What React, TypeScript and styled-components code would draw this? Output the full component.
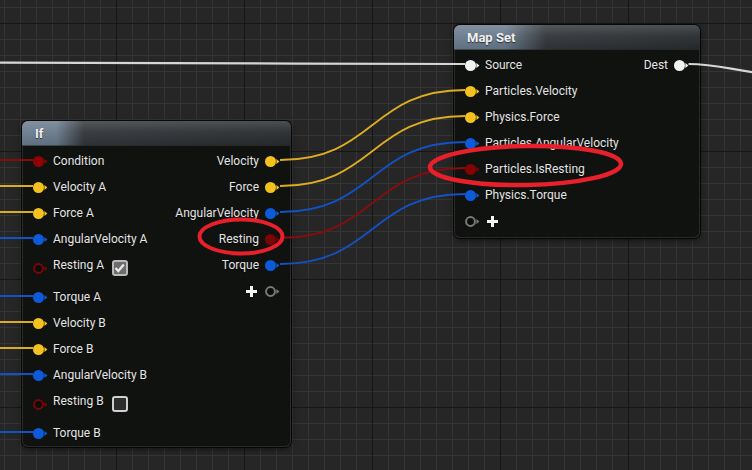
import React from "react";
import styled, { createGlobalStyle } from "styled-components";

const GlobalStyle = createGlobalStyle`
  html, body { margin: 0; padding: 0; background: #262626; overflow: hidden; }
  #root { width: 752px; height: 470px; }
`;

const Canvas = styled.div`
  position: relative;
  width: 752px;
  height: 470px;
  overflow: hidden;
  background-color: #262626;
  background-image:
    linear-gradient(to right, #161616 1px, transparent 1px),
    linear-gradient(to bottom, #161616 1px, transparent 1px),
    linear-gradient(to right, #353535 1px, transparent 1px),
    linear-gradient(to bottom, #353535 1px, transparent 1px);
  background-size: 128px 128px, 128px 128px, 16px 16px, 16px 16px;
  background-position: 116px 0, 0 23px, 4px 0, 0 7px;
  font-family: Roboto, "Noto Sans", "Liberation Sans", sans-serif;
`;

const NodeBox = styled.div<{ $x: number; $y: number; $w: number; $h: number }>`
  position: absolute;
  left: ${(p) => p.$x}px;
  top: ${(p) => p.$y}px;
  width: ${(p) => p.$w}px;
  height: ${(p) => p.$h}px;
  box-sizing: border-box;
  border-radius: 6px;
  background: rgba(15, 17, 15, 0.93);
  box-shadow: 0 0 0 1px rgba(0, 0, 0, 0.75), inset 0 0 0 1px rgba(90, 90, 90, 0.35),
    0 2px 6px rgba(0, 0, 0, 0.55);
  display: flex;
  flex-direction: column;
  z-index: 1;
`;

const Header = styled.div<{ $fade: number }>`
  height: 24px;
  flex: none;
  display: flex;
  align-items: center;
  padding-left: 13px;
  border-radius: 6px 6px 0 0;
  background:
    linear-gradient(to bottom, rgba(255, 255, 255, 0.16) 0, rgba(255, 255, 255, 0.04) 45%, rgba(0, 0, 0, 0.1) 100%),
    linear-gradient(
      to right,
      #6c7d90 0,
      #6a7b8d ${(p) => Math.round(p.$fade * 0.55)}px,
      #33373b ${(p) => p.$fade}px,
      #2a2d30 100%
    );
  border-bottom: 1px solid rgba(0, 0, 0, 0.5);
  color: #f0f0f0;
  font-weight: 700;
  font-size: 13px;
  text-shadow: 0 1px 1px rgba(0, 0, 0, 0.6);
`;

const Body = styled.div`
  flex: 1;
  display: flex;
  justify-content: space-between;
  padding-top: 2px;
`;

const Column = styled.div<{ $side: "left" | "right" }>`
  display: flex;
  flex-direction: column;
  align-items: ${(p) => (p.$side === "left" ? "flex-start" : "flex-end")};
  padding-left: ${(p) => (p.$side === "left" ? 11 : 0)}px;
  padding-right: ${(p) => (p.$side === "right" ? 11 : 0)}px;
`;

const Row = styled.div<{ $tall?: boolean; $gap?: number }>`
  height: ${(p) => (p.$tall ? 32 : 26)}px;
  display: flex;
  align-items: center;
  gap: ${(p) => p.$gap ?? 5}px;
`;

const Label = styled.span<{ $lift?: boolean }>`
  font-size: 12px;
  color: #e4e4e4;
  white-space: nowrap;
  text-shadow: 0 1px 1px rgba(0, 0, 0, 0.5);
  transform: translateY(${(p) => (p.$lift ? -3 : 0)}px);
`;

const PinSvg = styled.svg`
  display: block;
  flex: none;
`;

const Pin = ({ color, hollow }: { color: string; hollow?: boolean }) => (
  <PinSvg width={15} height={11} viewBox="0 0 15 11">
    {hollow ? (
      <circle cx={5.5} cy={5.5} r={4.4} fill="#0c0c0c" stroke={color} strokeWidth={2} />
    ) : (
      <circle cx={5.5} cy={5.5} r={5.5} fill={color} />
    )}
    <polygon points="11.4,3 14.4,5.5 11.4,8" fill={color} />
  </PinSvg>
);

const Plus = () => (
  <PinSvg width={11} height={11} viewBox="0 0 11 11">
    <rect x={4} y={0} width={3} height={11} fill="#f2f2f2" />
    <rect x={0} y={4} width={11} height={3} fill="#f2f2f2" />
  </PinSvg>
);

const CheckBox = styled.div<{ $checked?: boolean }>`
  width: 16px;
  height: 16px;
  box-sizing: border-box;
  margin-left: 3px;
  border-radius: 3px;
  border: 2px solid ${(p) => (p.$checked ? "#b9b9b9" : "#cfcfcf")};
  background: ${(p) => (p.$checked ? "#6c6c6c" : "#2d2d2d")};
  display: flex;
  align-items: center;
  justify-content: center;
`;

const Check = () => (
  <PinSvg width={11} height={10} viewBox="0 0 11 10">
    <polyline points="1.5,5 4.3,8 9.8,1.5" fill="none" stroke="#e8e8e8" strokeWidth={2.4} />
  </PinSvg>
);

const Layer = styled.svg<{ $z: number }>`
  position: absolute;
  left: 0;
  top: 0;
  pointer-events: none;
  z-index: ${(p) => p.$z};
`;

const YELLOW = "#f4c21f";
const BLUE = "#0d5bd8";
const RED = "#8e0303";
const WHITE = "#f2f2f2";
const GREY = "#7a7a7a";

const W_YELLOW = "#dcac22";
const W_BLUE = "#1352c4";
const W_RED = "#870d0d";

type PinRow = { label: string; color: string; hollow?: boolean; check?: "on" | "off" };

const ifInputs: PinRow[] = [
  { label: "Condition", color: RED },
  { label: "Velocity A", color: YELLOW },
  { label: "Force A", color: YELLOW },
  { label: "AngularVelocity A", color: BLUE },
  { label: "Resting A", color: "#7c0606", hollow: true, check: "on" },
  { label: "Torque A", color: BLUE },
  { label: "Velocity B", color: YELLOW },
  { label: "Force B", color: YELLOW },
  { label: "AngularVelocity B", color: BLUE },
  { label: "Resting B", color: "#7c0606", hollow: true, check: "off" },
  { label: "Torque B", color: BLUE },
];

const ifOutputs: PinRow[] = [
  { label: "Velocity", color: YELLOW },
  { label: "Force", color: YELLOW },
  { label: "AngularVelocity", color: BLUE },
  { label: "Resting", color: "#7a0404" },
  { label: "Torque", color: BLUE },
];

const mapInputs: PinRow[] = [
  { label: "Source", color: WHITE },
  { label: "Particles.Velocity", color: YELLOW },
  { label: "Physics.Force", color: YELLOW },
  { label: "Particles.AngularVelocity", color: BLUE },
  { label: "Particles.IsResting", color: "#860303" },
  { label: "Physics.Torque", color: BLUE },
];

const InputRow = ({ row }: { row: PinRow }) => (
  <Row $tall={!!row.check}>
    <Pin color={row.color} hollow={row.hollow} />
    <Label $lift={!!row.check}>{row.label}</Label>
    {row.check && <CheckBox $checked={row.check === "on"}>{row.check === "on" && <Check />}</CheckBox>}
  </Row>
);

const OutputRow = ({ row }: { row: PinRow }) => (
  <Row $gap={6}>
    <Label>{row.label}</Label>
    <Pin color={row.color} hollow={row.hollow} />
  </Row>
);

const spline = (x1: number, y1: number, x2: number, y2: number, d = 95) =>
  `M${x1},${y1} C${x1 + d},${y1} ${x2 - d},${y2} ${x2},${y2}`;

const leftWires: [number, string][] = [
  [160, W_RED],
  [186, W_YELLOW],
  [212, W_YELLOW],
  [238, W_BLUE],
  [296, W_BLUE],
  [322, W_YELLOW],
  [348, W_YELLOW],
  [374, W_BLUE],
  [432, W_BLUE],
];

const links: [number, number, string][] = [
  [160, 90, W_YELLOW],
  [186, 116, W_YELLOW],
  [212, 142, W_BLUE],
  [238, 168, W_RED],
  [264, 194, W_BLUE],
];

export default function App() {
  return (
    <>
      <GlobalStyle />
      <Canvas>
        <NodeBox $x={22} $y={121} $w={269} $h={326}>
          <Header $fade={62}>If</Header>
          <Body>
            <Column $side="left">
              {ifInputs.map((r) => (
                <InputRow key={r.label} row={r} />
              ))}
            </Column>
            <Column $side="right">
              {ifOutputs.map((r) => (
                <OutputRow key={r.label} row={r} />
              ))}
              <Row $gap={8}>
                <Plus />
                <Pin color={GREY} hollow />
              </Row>
            </Column>
          </Body>
        </NodeBox>

        <NodeBox $x={454} $y={25} $w={246} $h={213}>
          <Header $fade={92}>Map Set</Header>
          <Body>
            <Column $side="left">
              {mapInputs.map((r) => (
                <InputRow key={r.label} row={r} />
              ))}
              <Row $gap={7}>
                <Pin color={GREY} hollow />
                <Plus />
              </Row>
            </Column>
            <Column $side="right">
              <OutputRow row={{ label: "Dest", color: WHITE }} />
            </Column>
          </Body>
        </NodeBox>

        <Layer $z={2} width={752} height={470} viewBox="0 0 752 470">
          <path d="M-10,62.5 C200,62.5 300,64 465,64" fill="none" stroke="#d6d6d6" strokeWidth={2.2} />
          <path d="M688.5,64 C712,64 722,67.5 760,73.5" fill="none" stroke="#d6d6d6" strokeWidth={2.2} />
          {leftWires.map(([y, c]) => (
            <line key={y} x1={-2} y1={y} x2={33} y2={y} stroke={c} strokeWidth={1.8} />
          ))}
          {links.map(([y1, y2, c]) => (
            <path key={y1} d={spline(280, y1, 465, y2)} fill="none" stroke={c} strokeWidth={1.8} />
          ))}
        </Layer>

        <Layer $z={3} width={752} height={470} viewBox="0 0 752 470">
          <ellipse cx={241} cy={236.5} rx={41.5} ry={17} fill="none" stroke="#e8202b" strokeWidth={4} />
          <ellipse
            cx={525.5}
            cy={165.5}
            rx={95.5}
            ry={19.5}
            fill="none"
            stroke="#e8202b"
            strokeWidth={4.5}
            transform="rotate(-1 525.5 165.5)"
          />
        </Layer>
      </Canvas>
    </>
  );
}
